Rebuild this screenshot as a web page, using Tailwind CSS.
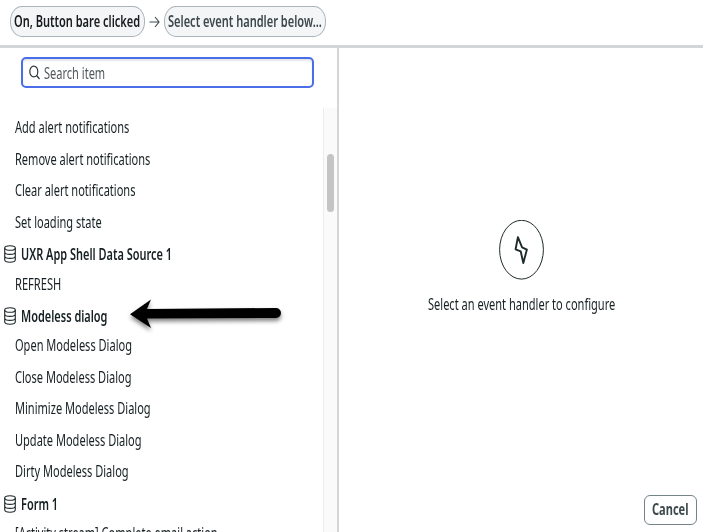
<!DOCTYPE html>
<html lang="en">
<head>
<meta charset="utf-8">
<title>Event handlers</title>
<script src="https://cdn.jsdelivr.net/npm/@tailwindcss/browser@4"></script>
</head>
<body class="h-[532px] w-[703px] overflow-hidden bg-white font-['Noto_Sans','Open_Sans',sans-serif] text-[16px] text-[#162022]">
<svg class="hidden">
  <symbol id="db" viewBox="0 0 12 18">
    <g fill="none" stroke="#1f2a2b" stroke-width="1.100"><ellipse cx="6" cy="3" rx="5.3" ry="2.3"/><path d="M.7 3v11.8C.7 16.300 3 17.300 6 17.300s5.300-1 5.300-2.500V3M.7 7c0 1.500 2.300 2.400 5.300 2.400S11.300 8.500 11.300 7M.7 11c0 1.500 2.300 2.400 5.300 2.400s5.300-.9 5.300-2.400"/></g>
  </symbol>
</svg>
<div class="flex h-full flex-col">
  <header class="flex h-[48px] shrink-0 items-start border-b-[3px] border-[#d2d6d9] pl-[10px] pt-[6px]">
    <div class="flex h-[31px] w-[135px] items-center rounded-[12px/15px] border border-[#a9b4b8] bg-[#f3f5f7] pb-px pl-[3px] font-semibold"><span class="inline-block origin-left scale-x-[0.69] whitespace-nowrap text-[#161b1c]">On, Button bare clicked</span></div>
    <svg class="ml-[4px] mt-[10px] h-[12px] w-[11px]" viewBox="0 0 11 12" fill="none" stroke="#3c484b" stroke-width="1.100"><path d="M.5 6H10M6 1l4 5-4 5"/></svg>
    <div class="ml-[4px] flex h-[31px] w-[162px] items-center rounded-[12px/15px] border border-[#a9b4b8] bg-[#f3f5f7] pb-px pl-[3px] font-semibold"><span class="inline-block origin-left scale-x-[0.69] whitespace-nowrap text-[#3c484b]">Select event handler below...</span></div>
  </header>
  <main class="flex min-h-0 flex-1">
    <section class="flex w-[339px] shrink-0 flex-col border-r-2 border-[#d2d6d9]">
      <div class="h-[60px] shrink-0 pl-[21px] pt-[9px]">
        <div class="flex h-[31px] w-[293px] items-center rounded-[5px] border-2 border-[#4a6ee8] pl-[6px] shadow-[inset_0_2px_2px_#e4e6ea]">
          <svg class="h-[15px] w-[11px]" viewBox="0 0 11 15" fill="none" stroke="#2b3638" stroke-width="1.200"><ellipse cx="4.800" cy="6.500" rx="4" ry="5.400"/><path d="M7.500 10.500l3 3.500"/></svg>
          <span class="ml-[4px] inline-block origin-left scale-x-[0.69] whitespace-nowrap text-[#4f595c]">Search item</span>
        </div>
      </div>
      <div class="flex min-h-0 flex-1">
        <ul class="min-w-0 flex-1 overflow-hidden pt-[3.2px] *:flex *:h-[31.6px] *:items-center *:whitespace-nowrap">
          <li class="pl-[15px]"><span class="origin-left scale-x-[0.69]">Add alert notifications</span></li>
          <li class="pl-[15px]"><span class="origin-left scale-x-[0.69]">Remove alert notifications</span></li>
          <li class="pl-[15px]"><span class="origin-left scale-x-[0.69]">Clear alert notifications</span></li>
          <li class="pl-[15px]"><span class="origin-left scale-x-[0.69]">Set loading state</span></li>
          <li class="-mb-[1.6px] gap-[5px] pl-[4px] pt-[2px] font-semibold"><svg class="h-[18px] w-[12px] shrink-0"><use href="#db"/></svg><span class="origin-left scale-x-[0.685]">UXR App Shell Data Source 1</span></li>
          <li class="pl-[15px] pt-px"><span class="origin-left scale-x-[0.695]">REFRESH</span></li>
          <li class="-mb-[1.6px] gap-[5px] pl-[4px] pt-[2px] font-semibold"><svg class="h-[18px] w-[12px] shrink-0"><use href="#db"/></svg><span class="origin-left scale-x-[0.685]">Modeless dialog</span></li>
          <li class="pl-[15px]"><span class="origin-left scale-x-[0.69]">Open Modeless Dialog</span></li>
          <li class="pl-[15px]"><span class="origin-left scale-x-[0.69]">Close Modeless Dialog</span></li>
          <li class="pl-[15px]"><span class="origin-left scale-x-[0.69]">Minimize Modeless Dialog</span></li>
          <li class="pl-[15px]"><span class="origin-left scale-x-[0.69]">Update Modeless Dialog</span></li>
          <li class="pl-[15px]"><span class="origin-left scale-x-[0.69]">Dirty Modeless Dialog</span></li>
          <li class="-mb-[1.6px] gap-[5px] pl-[4px] pt-[2px] font-semibold"><svg class="h-[18px] w-[12px] shrink-0"><use href="#db"/></svg><span class="origin-left scale-x-[0.685]">Form 1</span></li>
          <li class="pl-[15px]"><span class="origin-left scale-x-[0.69]">[Activity stream] Complete email action</span></li>
        </ul>
        <div class="w-[14px] shrink-0 border-l border-[#ececec] bg-[#fafafa] pl-[3px] pt-[46px]"><div class="h-[58px] w-[7px] rounded-full bg-[#c4c4c4]"></div></div>
      </div>
    </section>
    <section class="flex flex-1 flex-col items-center pt-[172px]">
      <svg class="h-[60px] w-[45px]" viewBox="0 0 45 60" fill="none" stroke="#1f2a2b"><ellipse cx="22.500" cy="29.700" rx="21.900" ry="29.400" stroke-width="1"/><path d="M18.900 17.200L16.600 29.300 21.700 31.300 24.300 43 27.900 29.600 23.100 27.400z" stroke-width="1.900" stroke-linejoin="round"/></svg>
      <div class="mt-[12px] flex w-[187px] whitespace-nowrap"><span class="origin-left scale-x-[0.69]">Select an event handler to configure</span></div>
      <div class="mb-[7px] mr-[6px] mt-auto flex h-[30px] w-[53px] items-center self-end rounded-[6px] border border-[#74828a] pb-[2px] pl-[7px] font-bold text-[#3c484b]"><span class="origin-left scale-x-[0.69]">Cancel</span></div>
    </section>
  </main>
</div>
<svg class="absolute left-[124px] top-[292px] h-[48px] w-[165px] drop-shadow-[0_3px_2px_rgba(0,0,0,0.5)]" viewBox="0 0 165 48"><path d="M6 22.300L27 7.500 23 17 152 16a4.500 4.500 0 0 1 0 10L23 26.500 27 36z" fill="#000"/></svg>
</body>
</html>
